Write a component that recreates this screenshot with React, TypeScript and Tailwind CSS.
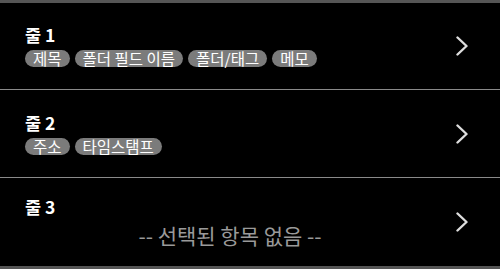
const font = { fontFamily: '"Noto Sans CJK KR", "Noto Sans", sans-serif' };

function Chevron() {
  return (
    <svg width="12" height="20" viewBox="0 0 12 20" className="shrink-0" aria-hidden>
      <polyline
        points="1.5,1.5 10.5,10 1.5,18.5"
        fill="none"
        stroke="#dddddd"
        strokeWidth="2.4"
        strokeLinecap="round"
        strokeLinejoin="round"
      />
    </svg>
  );
}

function Tag({ label }: { label: string }) {
  return (
    <span className="rounded-full bg-[#7b7b7b] px-[8px] text-[15.5px] leading-[17px] text-white">
      {label}
    </span>
  );
}

function Row({
  title,
  tags,
  height,
}: {
  title: string;
  tags?: string[];
  height: string;
}) {
  return (
    <div className={`flex items-center pl-[25px] pr-[32px] ${height}`}>
      <div className="flex flex-1 flex-col gap-[5px]">
        <p className="text-[17.5px] font-bold leading-[20px] text-white">{title}</p>
        {tags ? (
          <div className="flex gap-[5px]">
            {tags.map((t) => (
              <Tag key={t} label={t} />
            ))}
          </div>
        ) : (
          <p className="text-center text-[21px] leading-[26px] text-[#9a9a9a]">
            -- 선택된 항목 없음 --
          </p>
        )}
      </div>
      <div className="ml-[21px]">
        <Chevron />
      </div>
    </div>
  );
}

export default function App() {
  return (
    <div
      className="flex h-[269px] w-[500px] flex-col overflow-hidden border-y-[3px] border-[#555555] bg-black"
      style={font}
    >
      <Row title="줄 1" tags={["제목", "폴더 필드 이름", "폴더/태그", "메모"]} height="h-[86px]" />
      <div className="h-px bg-[#8a8a8a]" />
      <Row title="줄 2" tags={["주소", "타임스탬프"]} height="h-[87px]" />
      <div className="h-px bg-[#8a8a8a]" />
      <Row title="줄 3" height="h-[88px]" />
    </div>
  );
}
